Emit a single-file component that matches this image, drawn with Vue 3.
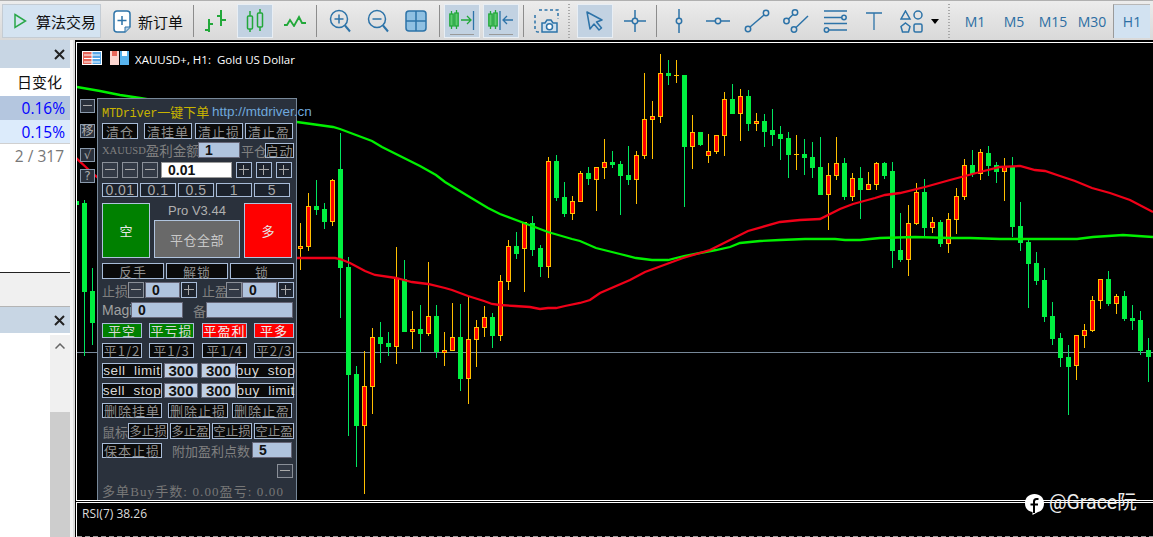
<script setup>
// [type, wickTop, wickBottom, bodyTop, bodyBottom]; g = falling (green), r = rising (red)
const series = [
  ['r',223,270,246,249],['r',193,251,206,247],['g',180,215,206,210],['g',203,229,209,222],['r',179,226,180,222],
  ['g',133,318,169,268],['g',257,436,267,375],['g',366,467,374,426],['r',351,494,386,426],['r',328,414,337,387],
  ['g',322,363,337,344],['g',332,356,343,347],['r',247,364,278,347],['g',260,332,279,332],['r',311,349,329,332],
  ['g',305,352,329,334],['r',262,336,316,334],['g',305,358,316,352],['r',332,366,350,353],['r',303,351,337,351],
  ['g',304,391,337,379],['r',297,404,339,379],['r',320,367,327,340],['r',306,337,317,328],['g',313,348,317,336],
  ['r',275,341,281,336],['r',240,290,246,282],['g',232,259,246,254],['r',222,292,222,249],['g',216,256,223,250],
  ['g',245,277,248,267],['r',157,278,161,267],['g',155,201,161,198],['g',182,217,197,214],['r',196,220,201,214],
  ['r',171,202,173,202],['g',167,185,173,179],['r',167,211,167,180],['r',139,179,162,168],['g',151,168,162,165],
  ['g',161,215,164,176],['g',146,185,175,180],['r',151,204,155,180],['r',73,159,119,156],['r',101,159,116,120],
  ['r',54,123,73,117],['g',60,85,73,76],['d',60,83,75,75],['g',75,207,75,147],['r',115,169,132,147],
  ['g',132,146,132,145],['r',134,163,151,156],['r',135,154,135,152],['r',92,156,99,136],['g',84,114,99,114],
  ['r',89,141,96,114],['g',90,131,96,124],['r',113,131,121,124],['g',114,147,121,132],['g',109,146,130,135],
  ['g',126,160,134,139],['g',132,178,138,155],['d',135,170,154,154],['g',139,175,154,158],['g',142,178,157,168],
  ['g',137,195,167,195],['r',163,230,175,195],['r',137,180,163,176],['g',158,200,163,197],['r',173,201,178,197],
  ['g',167,219,178,190],['r',172,190,184,190],['r',162,190,163,185],['g',162,179,163,176],['g',162,268,171,251],
  ['g',213,262,250,260],['r',205,276,223,260],['r',183,225,192,224],['g',179,237,192,228],['r',217,233,222,228],
  ['g',220,247,222,244],['r',213,253,219,244],['r',188,234,196,220],['r',159,200,165,197],['g',150,177,165,174],
  ['r',149,180,152,174],['g',146,176,153,166],['g',162,183,165,172],['r',158,201,167,172],['g',157,237,167,227],
  ['g',202,251,226,243],['g',239,308,242,264],['g',252,285,263,281],['g',268,322,280,317],['g',302,345,316,339],
  ['g',333,367,338,358],['g',345,415,357,367],['r',335,380,335,366],['r',324,348,330,336],['r',296,332,300,331],
  ['r',279,309,279,301],['g',271,306,279,304],['r',294,314,296,304],['g',291,321,296,319],['g',305,330,318,321],
  ['g',311,355,320,351],['g',338,382,350,357],
]

const earlier = [
  { x: 76, type: 'g', wt: 198, wb: 210, bt: 201, bb: 205 },
  { x: 84, type: 'g', wt: 200, wb: 356, bt: 203, bb: 292 },
  { x: 92, type: 'g', wt: 268, wb: 345, bt: 291, bb: 323 },
]

const candles = [
  ...earlier,
  ...series.map(([type, wt, wb, bt, bb], i) => ({ x: 300 + i * 8, type, wt, wb, bt, bb })),
]

const greenMa = '77,87 100,91 120,95 140,98 200,108 297,122 333,127 340,129 372,141 382,147 420,166 436,175 445,182 468,196 488,208 500,214 524,223 540,229 548,232 572,239 580,241 596,248 620,254 636,258 652,260 668,260 684,256 700,253 716,250 730,247 740,243 760,241 780,240 805,239 835,239 845,240 860,240 880,238 915,237 950,238 970,238 1000,239 1030,239 1077,239 1093,237 1123,235 1153,237'
const redMa = '76,158 89,170 97,177 200,240 297,258 335,258 340,259 350,263 365,271 375,275 396,278 404,280 412,282 428,284 445,288 452,290 468,296 484,301 492,304 500,305 515,306 530,307 540,309 548,308 556,308 565,306 580,303 590,300 600,293 630,280 645,272 683,258 710,250 730,240 748,231 780,222 800,220 820,219 840,209 853,204 875,198 885,195 900,193 925,187 950,180 980,172 1000,167 1020,166 1035,170 1045,171 1060,176 1075,181 1092,188 1110,193 1130,200 1153,212'
</script>

<template>
  <div class="app">
    <header class="toolbar">
      <div class="tool active w99 algo">
        <svg width="14" height="16" viewBox="0 0 14 16"><path d="M2 1.500 12.500 8 2 14.500Z" fill="none" stroke="#2aa84a" stroke-width="1.500"/></svg>
        <span class="tool-text">算法交易</span>
      </div>
      <div class="tool w92 neworder">
        <svg width="18" height="23" viewBox="0 0 18 23"><path d="M4 1h10a3 3 0 0 1 3 3v13l-5 5H4a3 3 0 0 1-3-3V4a3 3 0 0 1 3-3Z" fill="#fff" stroke="#2d73a8" stroke-width="1.500"/><path d="M9 6v9M4.500 10.500h9" stroke="#2d73a8" stroke-width="1.500"/><path d="M12 22v-5h5" fill="#b9d3e8" stroke="#2d73a8"/></svg>
        <span class="tool-text">新订单</span>
      </div>
      <i class="sep"></i>
      <div class="tool w43">
        <svg width="24" height="24" viewBox="0 0 24 24" fill="none" stroke="#22a83a" stroke-width="2"><path d="M5 10v13M1 21h4M5 15h4M17 1v16M13 7h4M17 11h5"/></svg>
      </div>
      <div class="tool active w36">
        <svg width="18" height="24" viewBox="0 0 18 24" fill="none" stroke="#22a83a" stroke-width="1.500"><path d="M4 2v5M4 20v3M14 0v4M14 18v4"/><rect x="1.500" y="7" width="5" height="13" rx="1"/><rect x="11.500" y="4" width="5" height="14" rx="1"/></svg>
      </div>
      <div class="tool w43">
        <svg width="22" height="12" viewBox="0 0 22 12" fill="none" stroke="#22a83a" stroke-width="1.800"><path d="M0 10h3l3-5 4 6 5-9 3 6h4"/></svg>
      </div>
      <i class="sep"></i>
      <div class="tool w46">
        <svg width="22" height="24" viewBox="0 0 22 24" fill="none" stroke="#2d73a8" stroke-width="1.500"><circle cx="10" cy="10" r="8.500"/><path d="M16 16.500 21 22.500" stroke-width="2"/><path d="M10 5.500v9M5.500 10h9"/></svg>
      </div>
      <div class="tool w30">
        <svg width="22" height="24" viewBox="0 0 22 24" fill="none" stroke="#2d73a8" stroke-width="1.500"><circle cx="10" cy="10" r="8.500"/><path d="M16 16.500 21 22.500" stroke-width="2"/><path d="M5.500 10h9"/></svg>
      </div>
      <div class="tool w46">
        <svg width="22" height="22" viewBox="0 0 22 22"><rect x="1" y="1" width="20" height="20" rx="3" fill="#8fc0e2" stroke="#2d73a8" stroke-width="1.500"/><path d="M11 1v20M1 11h20" stroke="#2d73a8" stroke-width="1.500"/></svg>
      </div>
      <i class="sep"></i>
      <div class="tool active w36 ml4 shift">
        <svg width="26" height="26" viewBox="0 0 26 26" fill="none"><g stroke="#22a83a" stroke-width="1.300"><path d="M2.500 2v3M2.500 17v3M7.500 1v3M7.500 17v3"/><rect x=".8" y="5" width="3.400" height="12" fill="#5ecb70"/><rect x="5.800" y="4" width="3.400" height="13" fill="#5ecb70"/><path d="M12 11h10M18 7l4 4-4 4"/></g><path d="M24.500 2v19" stroke="#2d73a8" stroke-width="1.300"/><path d="M1 25.500h24" stroke="#999"/></svg>
      </div>
      <div class="tool active w36 ml3 shift">
        <svg width="26" height="26" viewBox="0 0 26 26" fill="none"><g stroke="#22a83a" stroke-width="1.300"><path d="M2.500 2v3M2.500 17v3M7.500 1v3M7.500 17v3"/><rect x=".8" y="5" width="3.400" height="12" fill="#5ecb70"/><rect x="5.800" y="4" width="3.400" height="13" fill="#5ecb70"/></g><path d="M12 2v19" stroke="#2d73a8" stroke-width="1.300"/><path d="M15 11h10M19 7l-4 4 4 4" stroke="#2d73a8" stroke-width="1.300"/><path d="M1 25.500h24" stroke="#999"/></svg>
      </div>
      <i class="sep ml4"></i>
      <div class="tool w44">
        <svg width="25" height="24" viewBox="0 0 25 24" fill="none" stroke="#2d73a8"><path d="M5 1h19v9M1 6v14a3 3 0 0 0 3 3h2" stroke-width="1.500" stroke-dasharray="3 2.500"/><path d="M8 14h3l2-3h4l2 3h4v9H8Z" fill="#cfe0ee" stroke-width="1.500"/><circle cx="15.500" cy="17.800" r="3" fill="#fff" stroke-width="1.500"/></svg>
      </div>
      <i class="grip"></i>
      <div class="tool active w36 ml7">
        <svg width="18" height="20" viewBox="0 0 18 20" fill="none" stroke="#2d73a8" stroke-width="1.500"><path d="M1 1 16 9l-5.500 2 5 6-2.500 2-5-6L4 18Z" stroke-linejoin="round"/></svg>
      </div>
      <div class="tool w43">
        <svg width="22" height="24" viewBox="0 0 22 24" fill="none" stroke="#2d73a8" stroke-width="1.500"><path d="M11 1v8M11 15v8M0 12h8M14 12h8"/><circle cx="11" cy="12" r="2.700"/></svg>
      </div>
      <i class="sep"></i>
      <div class="tool w44">
        <svg width="8" height="24" viewBox="0 0 8 24" fill="none" stroke="#2d73a8" stroke-width="1.500"><path d="M4 0v9M4 15v9"/><circle cx="4" cy="12" r="2.700"/></svg>
      </div>
      <div class="tool w34">
        <svg width="24" height="8" viewBox="0 0 24 8" fill="none" stroke="#2d73a8" stroke-width="1.500"><path d="M0 4h9M15 4h9"/><circle cx="12" cy="4" r="2.700"/></svg>
      </div>
      <div class="tool w44">
        <svg width="26" height="24" viewBox="0 0 26 24" fill="none" stroke="#2d73a8" stroke-width="1.500"><circle cx="4" cy="20" r="2.700"/><circle cx="22" cy="4" r="2.700"/><path d="M6 18 20 6"/></svg>
      </div>
      <div class="tool w34">
        <svg width="26" height="24" viewBox="0 0 26 24" fill="none" stroke="#2d73a8" stroke-width="1.500"><circle cx="12" cy="3.500" r="2.700"/><circle cx="3.500" cy="12" r="2.700"/><circle cx="11" cy="20.500" r="2.700"/><path d="M5.500 10 10 5.500M13 18.500 25 7"/></svg>
      </div>
      <div class="tool w44">
        <svg width="26" height="24" viewBox="0 0 26 24" fill="none" stroke="#2d73a8" stroke-width="1.500"><path d="M2 2h23M2 8.500h18M2 14.500h23M7 21h18"/><circle cx="22" cy="8.500" r="2.200"/><circle cx="4.500" cy="21" r="2.200"/></svg>
      </div>
      <div class="tool w34">
        <svg width="16" height="18" viewBox="0 0 16 18" fill="none" stroke="#2d73a8" stroke-width="1.300"><path d="M0 1h16M8 1v17"/></svg>
      </div>
      <div class="tool w40">
        <svg width="23" height="23" viewBox="0 0 23 23" fill="none" stroke="#2d73a8" stroke-width="1.500"><path d="M5.500 1 10 9H1Z"/><circle cx="18" cy="5" r="4"/><path d="M5.500 13 10 16.500 8.500 22h-6L1 16.500Z"/><rect x="14" y="14" width="8" height="8" rx="1.500"/></svg>
      </div>
      <div class="caret-cell"><i class="caret"></i></div>
      <i class="grip"></i>
      <div class="tool w40 ml5 tf">M1</div>
      <div class="tool w38 tf">M5</div>
      <div class="tool w40 tf">M15</div>
      <div class="tool w38 tf">M30</div>
      <div class="tool tfactive w37 ml2 tf">H1</div>
    </header>

    <div class="main">
      <aside class="side">
        <div class="list">
          <div class="side-head"><svg width="11" height="11" viewBox="0 0 11 11" stroke="#222" stroke-width="2"><path d="M1 1l9 9M10 1l-9 9"/></svg></div>
          <div class="cell">日变化</div>
          <div class="cell blue sel1">0.16%</div>
          <div class="cell blue sel2">0.15%</div>
          <div class="cell count">2 / 317</div>
          <div class="fill"></div>
          <div class="gap-strip"></div>
          <div class="side-head second"><svg width="11" height="11" viewBox="0 0 11 11" stroke="#222" stroke-width="2"><path d="M1 1l9 9M10 1l-9 9"/></svg></div>
          <div class="lower">
            <div class="lower-body"></div>
            <div class="scroll">
              <svg class="scroll-up" width="10" height="6" viewBox="0 0 10 6" fill="none" stroke="#666" stroke-width="1.500"><path d="M.5 5.500 5 1l4.500 4.500"/></svg>
              <div class="thumb"></div>
            </div>
          </div>
        </div>
      </aside>

      <section class="chart">
        <div class="window">
          <svg class="plot" width="1076" height="457" viewBox="77 43 1076 457">
            <path d="M77 352.500H1153" stroke="#778899"/>
            <g v-for="c in candles" :key="c.x" shape-rendering="crispEdges">
              <path :d="`M${c.x + 0.5} ${c.wt}V${c.wb}`" :stroke="c.type === 'g' ? '#00e660' : '#ffc000'"/>
              <rect v-if="c.type === 'g'" :x="c.x - 2" :y="c.bt" width="5" :height="c.bb - c.bt" fill="#00f040"/>
              <rect v-else-if="c.type === 'r'" :x="c.x - 1.5" :y="c.bt + 0.5" width="4" :height="Math.max(c.bb - c.bt - 1, 1)" fill="#ff0000" stroke="#ffc000"/>
              <path v-else :d="`M${c.x - 2} ${c.bt + 0.5}H${c.x + 3}`" stroke="#ffc000"/>
            </g>
            <polyline :points="greenMa" fill="none" stroke="#00f000" stroke-width="2.300"/>
            <polyline :points="redMa" fill="none" stroke="#f00018" stroke-width="2.300"/>
          </svg>

          <div class="legend">
            <svg width="20" height="14" viewBox="0 0 20 14"><rect width="10" height="14" fill="#e8675a"/><rect x="10" width="10" height="14" fill="#58a8e8"/><path d="M2 4h16M2 7.500h16M2 11h16" stroke="#fff"/><path d="M10 0v14" stroke="#fff"/><rect x=".5" y=".5" width="19" height="13" fill="none" stroke="#fff"/></svg>
            <svg class="legend-save" width="19" height="14" viewBox="0 0 19 14"><rect width="9" height="14" fill="#fbd5cf"/><rect x="10" width="9" height="14" fill="#58b4ee"/><rect x="2" width="5" height="5" fill="#e8675a"/><rect x="12" width="5" height="5" fill="#fff"/></svg>
            <span class="legend-text">XAUUSD+, H1:&nbsp; Gold US Dollar</span>
          </div>

          <div class="rail rail1"><i class="rail-dash"></i></div>
          <div class="rail rail2">移</div>
          <div class="rail rail3">√</div>
          <div class="rail rail4">?</div>

          <div class="panel">
            <div class="title"><span class="brand">MTDriver<em>一键下单</em></span><span class="url">http://mtdriver.cn</span></div>

            <div class="row">
              <span class="b w36">清仓</span><span class="b w48 ml6">清挂单</span><span class="b w48 ml3">清止损</span><span class="b w48 ml2">清止盈</span>
            </div>
            <div class="row mt3">
              <span class="lab xau w96">XAUUSD<em>盈利金额</em></span><span class="in w42">1</span><span class="lab w24 ml1">平仓</span><span class="b w29 short">启动</span>
            </div>
            <div class="row mt4">
              <span class="mi w16"></span><span class="mi w16 ml4"></span><span class="mi w16 ml4"></span>
              <span class="in white w71 ml3">0.01</span>
              <span class="pl w16 ml4"></span><span class="pl w16 ml4"></span><span class="pl w16 ml4"></span>
            </div>
            <div class="row h14 mt5 lots">
              <span class="b w36">0.01</span><span class="b w36 ml2">0.1</span><span class="b w36 ml2">0.5</span><span class="b w36 ml2">1</span><span class="b w36 ml2">5</span>
            </div>
            <div class="row h55 mt6">
              <span class="trade green w48">空</span>
              <div class="mid ml4">
                <span class="pro">Pro V3.44</span>
                <span class="closeall">平仓全部</span>
              </div>
              <span class="trade red w48 ml4">多</span>
            </div>
            <div class="row mt5">
              <span class="b w62">反手</span><span class="b w62 ml2">解锁</span><span class="b w64 ml2">锁</span>
            </div>
            <div class="row mt3">
              <span class="lab w26">止损</span><span class="mi w16"></span><span class="in w35 ml1">0</span><span class="pl w16 ml1"></span>
              <span class="lab w24 ml5">止盈</span><span class="mi w16"></span><span class="in w35">0</span><span class="pl w16 ml1"></span>
            </div>
            <div class="row mt4">
              <span class="lab sans w29">Magi</span><span class="in w52">0</span><span class="lab w13 ml10">备</span><span class="in w87"></span>
            </div>
            <div class="row h15 mt5">
              <span class="b w40 gbtn">平空</span><span class="b w45 ml7 gbtn">平亏损</span><span class="b w45 ml8 rbtn">平盈利</span><span class="b w40 ml7 rbtn">平多</span>
            </div>
            <div class="row h15 mt5">
              <span class="b w40">平1/2</span><span class="b w45 ml7">平1/3</span><span class="b w45 ml8">平1/4</span><span class="b w40 ml7">平2/3</span>
            </div>
            <div class="row h15 mt5">
              <span class="b w60 en">sell&nbsp; limit</span><span class="in num w34 ml2">300</span><span class="in num w35 ml3">300</span><span class="b w57 ml1 en">buy&nbsp; stop</span>
            </div>
            <div class="row h15 mt5">
              <span class="b w60 en">sell&nbsp; stop</span><span class="in num w34 ml2">300</span><span class="in num w35 ml3">300</span><span class="b w57 ml1 en">buy&nbsp; limit</span>
            </div>
            <div class="row h15 mt5">
              <span class="b w60">删除挂单</span><span class="b w60 ml6">删除止损</span><span class="b w60 ml4">删除止盈</span>
            </div>
            <div class="row mt5">
              <span class="lab w26">鼠标</span><span class="b w40 tight">多止损</span><span class="b w40 ml2 tight">多止盈</span><span class="b w40 ml2 tight">空止损</span><span class="b w40 ml2 tight">空止盈</span>
            </div>
            <div class="row mt3">
              <span class="b w60 low">保本止损</span><span class="lab w80 ml10">附加盈利点数</span><span class="in w40">5</span>
            </div>
            <div class="row h14 mt6 end">
              <span class="mi w16"></span>
            </div>
            <div class="summary">多单Buy手数: 0.00盈亏: 0.00</div>
          </div>
        </div>

        <div class="sub">
          <span class="rsi">RSI(7) 38.26</span>
          <i class="dash"></i>
        </div>

        <div class="mark">
          <svg width="21" height="22" viewBox="0 0 21 22"><path d="M10.500 1C16 1 20 4.500 20 10.500c0 5-3 8-6 8.500l-5.500 3v-3C4 18.500 1 15 1 10.500 1 4.500 5 1 10.500 1Z" fill="#fff"/><path d="M14.500 6h-2C11 6 10 7 10 8.500V20M6.500 11.500H14" fill="none" stroke="#000" stroke-width="2"/></svg>
          <span class="mark-text">@Grace阮</span>
        </div>
      </section>
    </div>
  </div>
</template>

<style scoped>
.app {
  width: 1153px;
  height: 537px;
  overflow: hidden;
  display: flex;
  flex-direction: column;
  background: #f0f0f0;
  font-family: "Open Sans", "Noto Sans CJK SC", sans-serif;
}
.toolbar {
  height: 40px;
  box-sizing: border-box;
  display: flex;
  align-items: center;
  padding: 2px 0 1px 2px;
  border-top: 1px solid #b0b0b0;
  background: linear-gradient(180deg, #ececec 0%, #e2e2e2 50%, #d9d9d9 100%);
  flex: none;
}
.tool {
  height: 34px;
  box-sizing: border-box;
  display: flex;
  align-items: center;
  justify-content: center;
  flex: none;
}
.active { background: #c2d2e2; border: 1px solid #e8eef4; }
.algo { background: #d4e3f1; justify-content: flex-start; padding-left: 10px; border-color: #c4ccd4; }
.neworder { justify-content: flex-start; padding-left: 12px; }
.tool-text { font: 15px "Noto Sans CJK SC", sans-serif; color: #111; margin-left: 9px; white-space: nowrap; }
.neworder .tool-text { margin-left: 7px; }
.shift svg { margin-top: 1px; }
.sep { width: 1px; height: 32px; background: #8c8c8c; flex: none; }
.grip {
  width: 2px;
  height: 34px;
  flex: none;
  background: repeating-linear-gradient(180deg, #a8a8a8 0 1px, transparent 1px 3px);
}
.caret-cell { width: 17px; flex: none; }
.caret { display: block; width: 0; height: 0; border: 4.500px solid transparent; border-top: 5px solid #000; border-bottom: 0; }
.tf { font-size: 14px; color: #2d6ea3; }
.tfactive { background: #d2e2f1; border-left: 1px solid #9a9a9a; border-top: 1px solid #b8b8b8; }

.w13 { width: 13px; } .w16 { width: 16px; } .w24 { width: 24px; } .w26 { width: 26px; } .w29 { width: 29px; }
.w30 { width: 30px; } .w34 { width: 34px; } .w35 { width: 35px; } .w36 { width: 36px; } .w37 { width: 37px; }
.w38 { width: 38px; } .w40 { width: 40px; } .w42 { width: 42px; } .w43 { width: 43px; } .w44 { width: 44px; }
.w45 { width: 45px; } .w46 { width: 46px; } .w48 { width: 48px; } .w52 { width: 52px; } .w57 { width: 57px; }
.w60 { width: 60px; } .w62 { width: 62px; } .w64 { width: 64px; } .w71 { width: 71px; } .w80 { width: 80px; }
.w87 { width: 87px; } .w92 { width: 92px; } .w96 { width: 96px; } .w99 { width: 99px; }
.ml1 { margin-left: 1px; } .ml2 { margin-left: 2px; } .ml3 { margin-left: 3px; } .ml4 { margin-left: 4px; }
.ml5 { margin-left: 5px; } .ml6 { margin-left: 6px; } .ml7 { margin-left: 7px; } .ml8 { margin-left: 8px; } .ml10 { margin-left: 10px; }
.mt3 { margin-top: 3px; } .mt4 { margin-top: 4px; } .mt5 { margin-top: 5px; } .mt6 { margin-top: 6px; }

.main { flex: 1; display: flex; min-height: 0; }
.side { width: 75px; flex: none; background: linear-gradient(90deg, #f0f0f0 0 73px, #dcdcdc 73px); }
.list { width: 70px; height: 100%; display: flex; flex-direction: column; background: #fff; }
.side-head { height: 28px; flex: none; background: #c8d6e4; display: flex; align-items: center; justify-content: flex-end; padding-right: 5px; box-sizing: border-box; }
.second { height: 27px; border-top: 1px solid #b4b4b4; }
.cell { height: 24px; flex: none; display: flex; align-items: center; justify-content: flex-end; padding-right: 5px; font-size: 15px; color: #111; border-bottom: 1px solid transparent; box-sizing: border-box; }
.cell:nth-child(2) { height: 28px; padding-right: 8px; font-family: "Noto Sans CJK SC", sans-serif; }
.blue { color: #0000ff; font-size: 15.500px; }
.sel1 { background: #b4c6df; }
.sel2 { background: #dcebfb; border-bottom-color: #d0d0d0; }
.count { color: #777; padding-right: 6px; font-size: 15.500px; }
.fill { height: 104px; flex: none; border-bottom: 1px solid #222; }
.gap-strip { height: 33px; flex: none; background: #f0f0f0; }
.lower { flex: 1; display: flex; margin-top: 2px; min-height: 0; }
.lower-body { width: 50px; background: #fff; }
.scroll { flex: 1; background: #f0f0f0; display: flex; flex-direction: column; align-items: center; }
.scroll-up { margin-top: 8px; margin-left: 0; }
.thumb { width: 100%; margin-top: 63px; flex: 1; background: #cdcdcd; }

.chart { position: relative; width: 1078px; flex: none; background: #000; padding: 2px 0 0 1px; box-sizing: border-box; display: flex; flex-direction: column; }
.window { position: relative; height: 459px; flex: none; box-sizing: border-box; border: 1px solid #fff; border-right: 0; background: #000; overflow: hidden; }
.plot { display: block; }
.legend { position: absolute; left: 5px; top: 5px; display: flex; align-items: center; }
.legend-save { margin-left: 8px; }
.legend-text { margin: 4px 0 0 6px; font: 11.500px "Open Sans", sans-serif; color: #fff; white-space: nowrap; }

.rail { position: absolute; left: 3px; width: 15px; height: 14px; box-sizing: border-box; border: 1px solid #8a9aac; background: #2a313c; color: #aaa; font: 12px/12px "DejaVu Sans", "Noto Sans CJK SC", sans-serif; text-align: center; }
.rail1 { top: 56px; }
.rail2 { top: 81px; }
.rail3 { top: 105px; }
.rail4 { top: 126px; }
.rail-dash { display: block; height: 1px; margin: 5px 2px 0; background: #aaa; }

.panel { position: absolute; left: 20px; top: 55px; width: 200px; height: 410px; box-sizing: border-box; border: 1px solid #778899; background: #2a313c; padding-left: 4px; color: #909090; font: 13px "Noto Sans CJK SC", sans-serif; }
.title { height: 24px; display: flex; align-items: center; white-space: nowrap; }
.brand { font: 12px "Liberation Mono", "Noto Sans CJK SC", monospace; letter-spacing: -.3px; color: #c8b400; width: 110px; flex: none; }
.brand em { font: 13px "Noto Sans CJK SC", sans-serif; letter-spacing: 0; }
.url { font: 13.500px "Liberation Sans", sans-serif; color: #6fa8dc; }
.row { display: flex; height: 16px; align-items: stretch; }
.h14 { height: 14px; }
.h15 { height: 15px; }
.h55 { height: 55px; }
.end { justify-content: flex-end; padding-right: 3px; }
.b { box-sizing: border-box; flex: none; border: 1px solid #a8bcd8; background: #0a0a0a; display: flex; align-items: center; justify-content: center; white-space: nowrap; font-size: 13px; letter-spacing: 1px; line-height: 1; color: #8f8f8f; }
.lots .b { font: 14px/1 "Liberation Sans", sans-serif; letter-spacing: .5px; background: #1c222c; color: #a8a8a8; }
.short { margin-top: 1px; height: 15px; }
.low { margin-top: 1px; height: 15px; }
.tight { letter-spacing: 0; font-size: 12.500px; }
.en { font: 13.500px/1 "Liberation Sans", sans-serif; letter-spacing: .5px; color: #d8d8d8; }
.lab { flex: none; display: flex; align-items: center; white-space: nowrap; font-size: 13px; color: #808080; }
.xau { font: 10.500px "Liberation Serif", "Noto Sans CJK SC", serif; }
.xau em { font: 13.500px "Noto Sans CJK SC", sans-serif; }
.sans { font: 14px "Liberation Sans", sans-serif; color: #a0a0a0; }
.in { box-sizing: border-box; flex: none; background: #b0c4de; border: 1px solid #667; font: bold 14px/1 "Liberation Sans", sans-serif; color: #111; display: flex; align-items: center; padding-left: 6px; }
.white { background: #fff; border-color: #999; }
.num { justify-content: center; padding: 0; font-size: 15px; background: #c0cfe4; }
.mi, .pl { box-sizing: border-box; flex: none; position: relative; border: 1px solid #8a8f98; background: #333a46; }
.pl { background: #1e242e; border-color: #a8bcd8; }
.mi::before, .pl::before { content: ""; position: absolute; left: 2px; right: 2px; top: calc(50% - 1px); height: 1px; background: #aaa; }
.pl::after { content: ""; position: absolute; top: 2px; bottom: 2px; left: calc(50% - 1px); width: 1px; background: #aaa; }
.trade { box-sizing: border-box; flex: none; border: 1px solid #b0c4de; display: flex; align-items: center; justify-content: center; color: #e8e8e8; font-size: 13px; }
.green { background: #008000; }
.red { background: #ff0000; }
.mid { width: 86px; flex: none; display: flex; flex-direction: column; }
.pro { height: 17px; text-align: center; font: 13px/16px "Liberation Sans", sans-serif; color: #b0b0b0; }
.closeall { flex: 1; box-sizing: border-box; border: 1px solid #b0c4de; background: #696969; color: #c8c8c8; display: flex; align-items: center; justify-content: center; font-size: 13px; letter-spacing: .5px; }
.gbtn { background: #008000; color: #d8d8d8; }
.rbtn { background: #ff0000; color: #eee; }
.summary { margin-top: 3px; font: 13px "Liberation Serif", "Noto Sans CJK SC", serif; letter-spacing: 1.100px; color: #777; white-space: nowrap; }

.sub { position: relative; flex: 1; margin-top: 1px; border-top: 1px solid #fff; border-left: 1px solid #fff; }
.rsi { position: absolute; left: 5px; top: 2px; font: 12px "Open Sans", sans-serif; color: #ddd; }
.dash { position: absolute; left: 0; right: 0; bottom: 0; height: 1px; background: repeating-linear-gradient(90deg, #999 0 5px, transparent 5px 8px); }
.mark { position: absolute; left: 949px; top: 452px; display: flex; align-items: center; color: #eee; }
.mark-text { margin: -7px 0 0 4px; font: 400 19.500px "Roboto", "Noto Sans CJK SC", sans-serif; white-space: nowrap; }
.mark svg { margin-top: 1px; }
</style>

<style>
html, body { background: #000; overflow: hidden; }
</style>
